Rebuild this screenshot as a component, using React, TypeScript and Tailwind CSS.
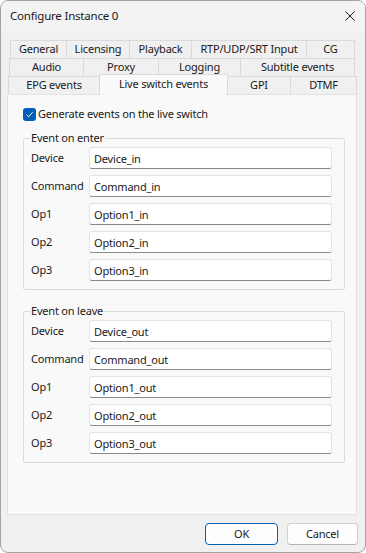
import React from "react";

const tabRows = [
	{
		ml: "ml-[9px]",
		tabs: [
			{ label: "General", w: "w-[57px]" },
			{ label: "Licensing", w: "w-[64px]" },
			{ label: "Playback", w: "w-[63px]" },
			{ label: "RTP/UDP/SRT Input", w: "w-[116px]" },
			{ label: "CG", w: "w-[49px]" },
		],
	},
	{
		ml: "ml-[8px]",
		tabs: [
			{ label: "Audio", w: "w-[75px]" },
			{ label: "Proxy", w: "w-[76px]" },
			{ label: "Logging", w: "w-[83px]" },
			{ label: "Subtitle events", w: "w-[115px]" },
		],
	},
];

const lastRow = [
	{ label: "EPG events", w: "w-[92px]", active: false },
	{ label: "Live switch events", w: "w-[129px]", active: true },
	{ label: "GPI", w: "w-[64px]", active: false },
	{ label: "DTMF", w: "w-[67px]", active: false },
];

const Field = ({ label, value }: { label: string; value: string }) => (
	<div className="flex items-center h-[22px]">
		<span className="w-[65px] pl-[7px]">{label}</span>
		<input
			readOnly
			defaultValue={value}
			className="w-[243px] h-[22px] px-[4px] bg-white border border-[#e3e3e3] border-b-[#8a8a8a] rounded-[3px] outline-none tracking-[-0.2px] text-[#1a1a1a]"
		/>
	</div>
);

const Group = ({ title, suffix, className }: { title: string; suffix: string; className: string }) => (
	<fieldset className={`w-[322px] border border-[#dcdcdc] rounded-[2px] pt-px pb-[8px] ${className}`}>
		<legend className="ml-[6px] px-px leading-[16px]">{title}</legend>
		<div className="flex flex-col gap-[6px]">
			<Field label="Device" value={`Device_${suffix}`} />
			<Field label="Command" value={`Command_${suffix}`} />
			<Field label="Op1" value={`Option1_${suffix}`} />
			<Field label="Op2" value={`Option2_${suffix}`} />
			<Field label="Op3" value={`Option3_${suffix}`} />
		</div>
	</fieldset>
);

export default function App() {
	return (
		<div className="w-[366px] h-[553px] bg-white font-['Noto_Sans',sans-serif] text-[11px] tracking-[-0.2px] text-[#1a1a1a]">
			<div className="w-full h-full flex flex-col border border-[#a3a3a3] rounded-[8px] bg-[#f0f0f0] overflow-hidden">
				{/* Title bar */}
				<div className="h-[30px] flex items-center justify-between pl-[9px] pr-[10px] bg-[#f3f3f3]">
					<span className="text-[11.5px]">Configure Instance 0</span>
					<svg width="10" height="10" viewBox="0 0 10 10">
						<path d="M0.5 0.5 L9.5 9.5 M9.5 0.5 L0.5 9.5" stroke="#1a1a1a" strokeWidth="1" />
					</svg>
				</div>

				{/* Tabs */}
				<div className="pt-[9px]">
					{tabRows.map((row, i) => (
						<div key={i} className={`flex h-[19px] ${row.ml} ${i > 0 ? "-mt-px" : ""}`}>
							{row.tabs.map((t, j) => (
								<div
									key={t.label}
									className={`${t.w} h-[19px] flex items-center justify-center border border-[#dadada] bg-[#f0f0f0] ${j > 0 ? "-ml-px" : ""}`}
								>
									{t.label}
								</div>
							))}
						</div>
					))}
					<div className="flex items-end h-[19px] ml-[7px] -mt-px">
						{lastRow.map((t, j) =>
							t.active ? (
								<div
									key={t.label}
									className={`${t.w} h-[21px] relative z-10 -ml-px flex items-start justify-center pt-[1px] border border-b-0 border-[#dadada] bg-[#f9f9f9]`}
								>
									{t.label}
								</div>
							) : (
								<div
									key={t.label}
									className={`${t.w} h-[19px] flex items-center justify-center border border-[#dadada] bg-[#f0f0f0] ${j > 0 ? "-ml-px" : ""}`}
								>
									{t.label}
								</div>
							)
						)}
					</div>
				</div>

				{/* Panel */}
				<div className="ml-[6px] -mt-px w-[350px] h-[421px] border border-[#e3e3e3] bg-[#f9f9f9] pl-[15px] pt-[11px]">
					<div className="flex items-center gap-[2px] h-[16px]">
						<span className="w-[13px] h-[13px] rounded-[3px] bg-[#005fb8] flex items-center justify-center">
							<svg width="9" height="9" viewBox="0 0 9 9">
								<path d="M1.5 4.8 L3.6 6.8 L7.6 2.2" fill="none" stroke="white" strokeWidth="1" />
							</svg>
						</span>
						<span>Generate events on the live switch</span>
					</div>
					<Group title="Event on enter" suffix="in" className="mt-[8px]" />
					<Group title="Event on leave" suffix="out" className="mt-[13px]" />
				</div>

				{/* Buttons */}
				<div className="flex justify-end gap-[9px] pr-[7px] mt-[8px]">
					<button className="w-[73px] h-[22px] rounded-[4px] border border-[#005fb8] bg-[#fdfdfd]">
						OK
					</button>
					<button className="w-[71px] h-[22px] rounded-[4px] border border-[#d0d0d0] border-b-[#b5b5b5] bg-[#fdfdfd]">
						Cancel
					</button>
				</div>
			</div>
		</div>
	);
}
